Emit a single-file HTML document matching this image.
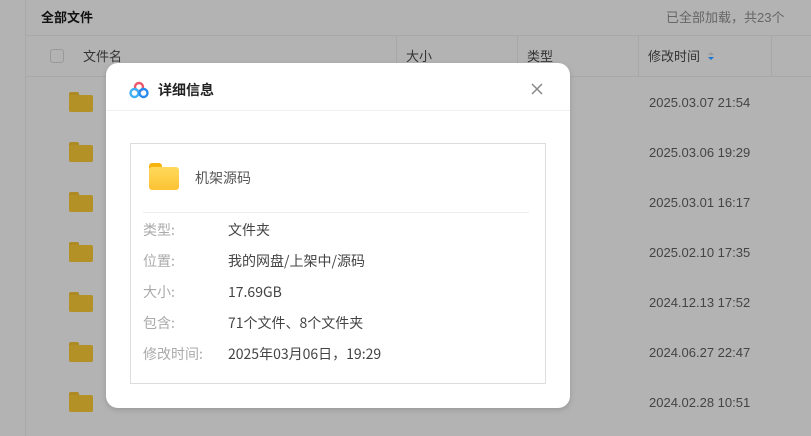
<!DOCTYPE html>
<html><head><meta charset="utf-8"><style>
*{margin:0;padding:0;box-sizing:border-box}
body{width:811px;height:436px;overflow:hidden;background:#b3b3b3;font-family:"Liberation Sans","Noto Sans CJK SC",sans-serif;position:relative;color:#333}
.abs{position:absolute}
.vl{position:absolute;width:1px;background:#a8a8a8}
.hl{position:absolute;height:1px;background:#a8a8a8}
.t{position:absolute;font-size:13px;white-space:nowrap;line-height:18px}
.fold{position:absolute;left:69px;width:24px;height:20px}
.fold:before{content:"";position:absolute;left:0;top:0;width:10px;height:4px;background:#ad8a22;border-radius:2px 2px 0 0}
.fold:after{content:"";position:absolute;left:0;top:3px;width:24px;height:17px;background:#b39126;border-radius:2px}
.date{position:absolute;left:649px;font-size:13px;color:#444;line-height:18px}
.modal{position:absolute;left:106px;top:63px;width:464px;height:345px;background:#fff;border-radius:12px;box-shadow:0 2px 6px rgba(0,0,0,.15)}
.lab,.val{position:absolute;font-size:14px;line-height:20px;font-family:"Noto Sans CJK SC","Liberation Sans",sans-serif;white-space:nowrap}
.lab{left:37px;color:#aaa}
.val{left:122px;color:#444}
</style></head><body>
<div class="vl" style="left:25px;top:0;height:436px"></div>
<div class="t" style="left:41px;top:9px;font-weight:bold;color:#111">全部文件</div>
<div class="t" style="left:666px;top:9px;color:#666">已全部加载，共23个</div>
<div class="hl" style="left:25px;top:35px;width:786px"></div>
<div class="hl" style="left:25px;top:76px;width:786px"></div>
<div class="abs" style="left:50px;top:49px;width:14px;height:14px;border:1px solid #999;border-radius:3px"></div>
<div class="t" style="left:83px;top:48px;color:#333">文件名</div>
<div class="vl" style="left:396px;top:36px;height:40px"></div>
<div class="t" style="left:406px;top:48px">大小</div>
<div class="vl" style="left:517px;top:36px;height:40px"></div>
<div class="t" style="left:527px;top:48px">类型</div>
<div class="vl" style="left:638px;top:36px;height:40px"></div>
<div class="t" style="left:648px;top:48px">修改时间</div>
<div class="abs" style="left:708px;top:52px;width:0;height:0;border:3px solid transparent;border-bottom-color:#999;border-top:0"></div>
<div class="abs" style="left:708px;top:57px;width:0;height:0;border:3px solid transparent;border-top-color:#1976d2;border-bottom:0"></div>
<div class="vl" style="left:771px;top:36px;height:40px"></div>
<div class="fold" style="top:92px"></div><div class="date" style="top:94px">2025.03.07 21:54</div>
<div class="fold" style="top:142px"></div><div class="date" style="top:144px">2025.03.06 19:29</div>
<div class="fold" style="top:192px"></div><div class="date" style="top:194px">2025.03.01 16:17</div>
<div class="fold" style="top:242px"></div><div class="date" style="top:244px">2025.02.10 17:35</div>
<div class="fold" style="top:292px"></div><div class="date" style="top:294px">2024.12.13 17:52</div>
<div class="fold" style="top:342px"></div><div class="date" style="top:344px">2024.06.27 22:47</div>
<div class="fold" style="top:392px"></div><div class="date" style="top:394px">2024.02.28 10:51</div>
<div class="modal">
 <svg class="abs" style="left:23px;top:18px" width="20" height="18" viewBox="0 0 20 18"><circle cx="10" cy="6" r="4" fill="none" stroke="#f0566a" stroke-width="2.4"/><circle cx="5.5" cy="12" r="4" fill="none" stroke="#3fb0f5" stroke-width="2.4"/><circle cx="14.5" cy="12" r="4" fill="none" stroke="#2a8cf0" stroke-width="2.4"/></svg>
 <div class="t" style="left:52px;top:18px;font-size:14px;font-weight:bold;color:#222">详细信息</div>
 <svg class="abs" style="left:425px;top:20px" width="12" height="12" viewBox="0 0 12 12"><path d="M1 1L11 11M11 1L1 11" stroke="#888" stroke-width="1.5"/></svg>
 <div class="abs" style="left:0;top:47px;width:464px;height:1px;background:#eef0f4"></div>
 <div class="abs" style="left:24px;top:80px;width:416px;height:241px;border:1px solid #ddd">
  <div class="abs" style="left:18px;top:19px;width:30px;height:27px">
   <div class="abs" style="left:0;top:0;width:13px;height:6px;background:#f5b40f;border-radius:3px 3px 0 0"></div>
   <div class="abs" style="left:0;top:4px;width:30px;height:23px;background:linear-gradient(#ffd95a,#fcc334);border-radius:3px"></div>
  </div>
  <div class="lab" style="left:64px;top:24px;color:#555">机架源码</div>
  <div class="abs" style="left:12px;top:68px;width:386px;height:1px;background:#eee"></div>
 </div>
 <div class="lab" style="top:157px">类型:</div><div class="val" style="top:157px">文件夹</div>
 <div class="lab" style="top:188px">位置:</div><div class="val" style="top:188px">我的网盘/上架中/源码</div>
 <div class="lab" style="top:219px">大小:</div><div class="val" style="top:219px">17.69GB</div>
 <div class="lab" style="top:250px">包含:</div><div class="val" style="top:250px">71个文件、8个文件夹</div>
 <div class="lab" style="top:281px">修改时间:</div><div class="val" style="top:281px">2025年03月06日，19:29</div>
</div>
</body></html>
